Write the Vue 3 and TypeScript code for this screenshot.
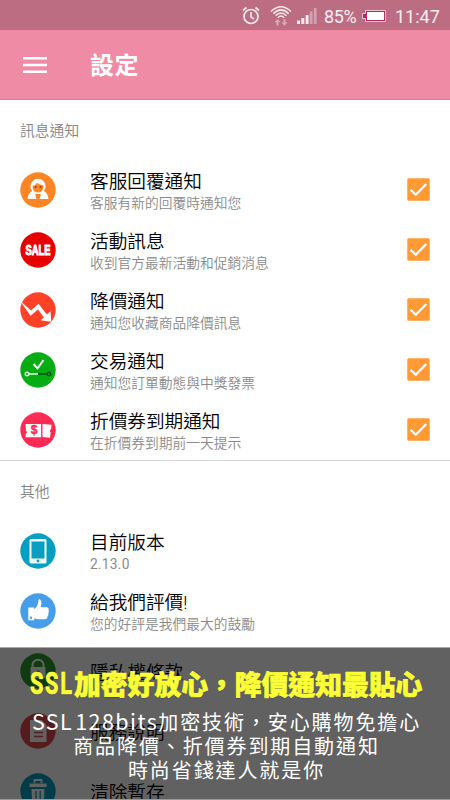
<script setup lang="ts">
interface Row {
  id: string
  title: string
  sub?: string
  color: string
}

const notices: Row[] = [
  { id: 'service', title: '客服回覆通知', sub: '客服有新的回覆時通知您', color: '#ff8424' },
  { id: 'sale', title: '活動訊息', sub: '收到官方最新活動和促銷消息', color: '#e60000' },
  { id: 'drop', title: '降價通知', sub: '通知您收藏商品降價訊息', color: '#ff4127' },
  { id: 'trade', title: '交易通知', sub: '通知您訂單動態與中獎發票', color: '#04ae12' },
  { id: 'coupon', title: '折價券到期通知', sub: '在折價券到期前一天提示', color: '#ff2a55' },
]

const others: Row[] = [
  { id: 'version', title: '目前版本', sub: '2.13.0', color: '#069fc1' },
  { id: 'rate', title: '給我們評價!', sub: '您的好評是我們最大的鼓勵', color: '#469eea' },
  { id: 'privacy', title: '隱私權條款', color: '#2c9c2c' },
  { id: 'terms', title: '服務說明', color: '#e04850' },
  { id: 'clear', title: '清除暫存', color: '#069fc1' },
]

const groups = [
  { name: '訊息通知', rows: notices, checks: true },
  { name: '其他', rows: others, checks: false },
]
</script>

<template>
  <div class="screen">
    <div class="status">
      <svg class="s-alarm" viewBox="0 0 18 20" fill="none" stroke="#f7e9ed" stroke-width="1.7">
        <circle cx="9" cy="10.5" r="7" />
        <path d="M9 6v5l3 2M1 4.500L4.500 1.500M17 4.500L13.500 1.500" />
      </svg>
      <svg class="s-wifi" viewBox="0 0 22 22" fill="none" stroke="#f7e9ed" stroke-width="1.5">
        <path d="M1 6.500Q11-3 21 6.500M3.300 8.700Q11 1 18.700 8.700M5.600 10.800Q11 5 16.400 10.800M8 12.700Q11 9.500 14 12.700" />
        <path d="M7.500 14l3 3.200h-2v3.300h-2v-3.300h-2zM14.500 20.700l-3-3.200h2v-3.300h2v3.300h2z" fill="#dca9b7" stroke="none" />
      </svg>
      <svg class="s-signal" viewBox="0 0 20 16">
        <path d="M0 12.500h3V16H0zM4.300 10h3v6h-3zM8.600 7h3v9h-3z" fill="#f7e9ed" />
        <path d="M12.700 3.500h2.800V16h-2.800zM16.800 0h2.800v16h-2.800z" fill="#d5a0ae" />
      </svg>
      <span class="pct">85%</span>
      <svg class="s-batt" viewBox="0 0 24 14">
        <path d="M3.500 1.500h20v11h-20v-3h-3v-5h3z" fill="#b02c5c" stroke="#e9c5cf" stroke-width="1" />
        <path d="M5 3h17v8H5z" fill="#fff" />
      </svg>
      <span class="clock">11:47</span>
    </div>
    <header class="bar">
      <svg class="menu" viewBox="0 0 24 16"><path d="M0 0h24v2.500H0zM0 6.800h24v2.500H0zM0 13.500h24V16H0z" fill="#fff" /></svg>
      <h1>設定</h1>
    </header>

    <section v-for="g in groups" :key="g.name">
      <h2>{{ g.name }}</h2>
      <div v-for="r in g.rows" :key="r.id" class="row">
        <svg class="icon" viewBox="0 0 36 36">
          <circle cx="18" cy="18" r="17.700" :fill="r.color" />
          <g v-if="r.id === 'service'">
            <path d="M13 18.500l5 3.500 5-3.500q5 2 5.500 8.500h-21q.5-6.500 5.500-8.500z" fill="#fff" />
            <path d="M18 20l2.800 2.500-1.300 4.700h-3l-1.300-4.700z" fill="#ff8424" />
            <circle cx="18" cy="14.300" r="7.600" fill="#fff" />
            <path d="M12.500 14q3-.5 4.500-3.300Q19 13 23.500 13.200q.3 7-5.500 7.300-5.500-.5-5.500-6.500z" fill="#ff8424" />
            <circle cx="15.700" cy="15" r="1.100" fill="#a83c12" /><circle cx="20.500" cy="15" r="1.100" fill="#a83c12" />
          </g>
          <text v-if="r.id === 'sale'" class="sale" x="5.500" y="23.300" textLength="25" lengthAdjust="spacingAndGlyphs">SALE</text>
          <path v-if="r.id === 'drop'" d="M1.500 10L11 18.500l7.500-6.800 8.300 10.800 3.700-3.200.8 10.500-10.800-1.500 3.500-2.800-6-8-7.500 6.200L1.500 11z" fill="#fff" />
          <g v-if="r.id === 'trade'" fill="none">
            <path d="M13.500 12l4 4.500L23.500 8" stroke="#fff" stroke-width="2" />
            <path d="M17.500 22h10" stroke="#095515" stroke-width="1.700" />
            <circle cx="29" cy="22" r="1.700" stroke="#095515" stroke-width="1.400" />
            <path d="M8.500 22h9.500" stroke="#d9ffdd" stroke-width="1.600" />
            <circle cx="7" cy="22" r="1.800" stroke="#d9ffdd" stroke-width="1.400" />
          </g>
          <g v-if="r.id === 'coupon'">
            <path d="M5.500 12h15.700v13.300H5.500l.3-3.500q2.300-1.300 0-3.300zM22.500 12l9 .7-.5 4.500q-2.300 1.300-.3 3.300l-.7 5.300-7.500-.8z" fill="#fff" />
            <path d="M21.500 12v14" stroke="#ff2a55" stroke-width="1" stroke-dasharray="1 1" />
            <text class="dollar" x="14" y="22.300" text-anchor="middle">$</text>
          </g>
          <g v-if="r.id === 'version'">
            <rect x="9.500" y="6" width="17" height="24.500" rx="1.500" fill="#edfbfd" />
            <path d="M11.500 8.500h13v17h-13z" fill="#069fc1" />
            <circle cx="18" cy="28" r="1.400" fill="#069fc1" />
          </g>
          <g v-if="r.id === 'rate'" fill="#fff">
            <path d="M8.300 14.500h6v12.800h-6z" />
            <path d="M14 16.500q4-2.500 4.500-9.500.2-1 1.300-.7 2.700 1.700 1 8h6q2.500.4 1.700 3 1 1.500-.2 3 .6 1.800-.8 3 .2 2.500-2.500 3H18q-2.500-.2-4-1.200z" />
            <circle cx="11" cy="24.800" r="1.200" fill="#469eea" />
          </g>
          <g v-if="r.id === 'privacy'">
            <path d="M12.500 15v-3.200a5.500 5 0 0 1 11 0V15" fill="none" stroke="#fff" stroke-width="2" />
            <rect x="10.500" y="14" width="15" height="11" rx="1" fill="#fff" /><circle cx="18" cy="19" r="1.700" fill="#2c9c2c" />
          </g>
          <g v-if="r.id === 'terms'">
            <path d="M10 7h11.500l5 5v17H10z" fill="#fff" /><path d="M14 19.500h9M14 23.500h9" stroke="#e04850" stroke-width="1.500" />
          </g>
          <g v-if="r.id === 'clear'">
            <path d="M9.500 10.500h17v3.500h-17zM11.500 16h13l-.8 16H12.300z" fill="#fff" />
            <path d="M14.500 10V7h7v3" fill="none" stroke="#fff" stroke-width="1.800" />
            <path d="M16 18v12M20.200 18v12" stroke="#069fc1" stroke-width="1.300" />
          </g>
        </svg>
        <div class="copy" :class="{ single: !r.sub }">
          <div class="title">{{ r.title }}</div>
          <div v-if="r.sub" class="sub" :class="{ number: r.id === 'version' }">{{ r.sub }}</div>
        </div>
        <svg v-if="g.checks" class="check" viewBox="0 0 23 23">
          <rect x=".3" y=".3" width="22.400" height="22.400" rx="1.500" fill="#ff9a35" />
          <path d="M3.500 11.700l5.300 5L19.300 6" fill="none" stroke="#fff" stroke-width="2.200" />
        </svg>
      </div>
    </section>

    <div class="promo">
      <div class="headline"><span class="latin">SSL</span><span>加密好放心，降價通知最貼心</span></div>
      <p><span class="bits">SSL<i></i>128bits</span>加密技術，安心購物免擔心</p>
      <p>商品降價、折價券到期自動通知</p>
      <p>時尚省錢達人就是你</p>
    </div>
  </div>
</template>

<style>
body { margin: 0; overflow: hidden; }
</style>

<style scoped>
.screen {
  position: relative;
  width: 450px;
  height: 800px;
  overflow: hidden;
  background: #fff;
  font-family: Roboto, "Noto Sans CJK TC", sans-serif;
}
.status {
  height: 30px;
  box-sizing: border-box;
  background: #bd6d81;
  display: flex;
  align-items: center;
  justify-content: flex-end;
  padding: 2px 11px 0 0;
  color: #f9eef1;
  font-size: 18px;
}
.s-alarm { width: 18px; height: 20px; margin-right: 10px; }
.s-wifi { width: 22px; height: 22px; margin-right: 5px; }
.s-signal { width: 20px; height: 16px; margin-right: 7px; }
.pct { width: 33px; white-space: nowrap; letter-spacing: -.4px; }
.s-batt { width: 24px; height: 14px; margin: 0 9px 0 5px; }
.clock { width: 44px; white-space: nowrap; }
.bar {
  height: 70px;
  box-sizing: border-box;
  background: #ef8ba4;
  border-top: 1px solid #ef849e;
  border-bottom: 1px solid #dd7c93;
  display: flex;
  align-items: center;
  padding-left: 23px;
}
.menu { width: 24px; height: 16px; margin-right: 43px; }
h1 { margin: 2px 0 0; font-size: 24px; line-height: 36px; font-weight: 700; color: #fff; letter-spacing: .6px; }
h2 {
  margin: 0;
  height: 60px;
  box-sizing: border-box;
  padding: 1px 0 0 20px;
  line-height: 60px;
  font-size: 14.800px;
  font-weight: 350;
  color: #858585;
}
section + section { border-top: 1px solid #d8d8d8; }
.row { height: 60px; display: flex; align-items: center; padding: 0 20px; }
.icon { width: 36px; height: 36px; margin-right: 34px; flex: none; }
.copy { flex: 1; padding-top: 3px; white-space: nowrap; }
.copy.single { padding-top: 5px; }
.title { font-size: 18.650px; line-height: 23px; color: #000; font-weight: 350; }
.sub { font-size: 13.750px; line-height: 19px; font-weight: 350; color: #8a8a8a; }
.number { font-weight: 400; letter-spacing: .25px; }
.check { width: 23px; height: 23px; flex: none; margin-bottom: 1px; }
.sale { font: 700 14px "Liberation Sans", sans-serif; fill: #fff; stroke: #fff; stroke-width: 1px; }
.dollar { font: 700 12px "Liberation Sans", sans-serif; fill: #ff2a55; stroke: #ff2a55; stroke-width: .4px; }
.promo {
  position: absolute;
  left: 0;
  right: 0;
  top: 647px;
  height: 153px;
  box-sizing: border-box;
  background: rgba(0, 0, 0, .62);
  background-clip: padding-box;
  border-top: 1px solid #aaa;
  border-bottom: 1px solid #999;
  padding-top: 17px;
  color: #fff;
  text-align: center;
}
.headline {
  display: flex;
  justify-content: flex-start;
  padding-left: 30px;
  height: 38px;
  line-height: 38px;
  font-family: "Noto Sans CJK TC", sans-serif;
  font-weight: 900;
  font-size: 26.800px;
  color: #fbff35;
  -webkit-text-stroke: .7px #fbff35;
  text-shadow: 0 1px 1px #44445c;
  white-space: nowrap;
}
.latin {
  width: 44px;
  font-family: Roboto, sans-serif;
  font-size: 31px;
  font-weight: 700;
  letter-spacing: 2.500px;
  transform: scaleX(.7);
  transform-origin: left;
}
.promo p {
  margin: 0;
  height: 24px;
  line-height: 24px;
  font-size: 20px;
  letter-spacing: 1.900px;
  white-space: nowrap;
  padding-left: 3px;
}
.promo p:nth-of-type(1) { margin-top: 6px; margin-bottom: 2px; }
.bits { font-family: "Noto Sans CJK TC", sans-serif; font-size: 21.500px; letter-spacing: 1.450px; }
.bits i { display: inline-block; width: 2px; }
</style>
